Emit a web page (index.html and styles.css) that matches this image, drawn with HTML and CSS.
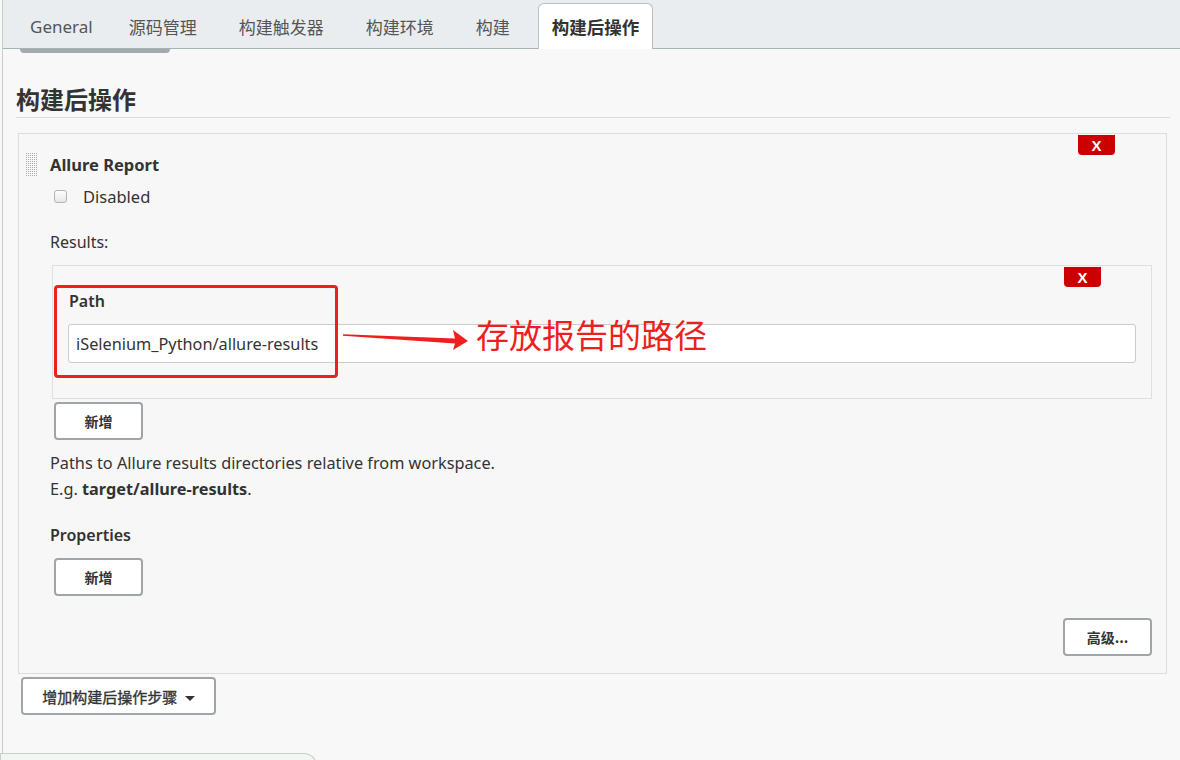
FILE: index.html
```html
<!DOCTYPE html>
<html lang="zh">
<head>
<meta charset="utf-8">
<title>构建后操作</title>
<link rel="stylesheet" href="styles.css">
</head>
<body>
<div class="page">
  <div class="tabbar">
    <div class="tab">General</div>
    <div class="tab">源码管理</div>
    <div class="tab">构建触发器</div>
    <div class="tab">构建环境</div>
    <div class="tab">构建</div>
    <div class="tab active">构建后操作</div>
  </div>
  <div class="tabshadow"></div>
  <div class="main">
    <h2 class="heading">构建后操作</h2>
    <div class="section">
      <div class="xbtn xbtn-outer">X</div>
      <div class="title-row">
        <span class="handle"></span>
        <span class="title">Allure Report</span>
      </div>
      <label class="check-row">
        <span class="checkbox"></span>
        <span>Disabled</span>
      </label>
      <div class="label results">Results:</div>
      <div class="inner">
        <div class="xbtn xbtn-inner">X</div>
        <div class="field-label">Path</div>
        <div class="input">iSelenium_Python/allure-results</div>
        <div class="anno-box"></div>
        <svg class="anno-arrow" width="130" height="24" viewBox="0 0 130 24"><polygon points="0,6.3 112,10.5 110,2 125,13 110,22 112,15.5 0,7.7" fill="#ee1f1f"/></svg>
        <div class="anno-text">存放报告的路径</div>
      </div>
      <button class="btn btn-add">新增</button>
      <div class="help">
        <div>Paths to Allure results directories relative from workspace.</div>
        <div>E.g. <b>target/allure-results</b>.</div>
      </div>
      <div class="label props">Properties</div>
      <button class="btn btn-add btn-add2">新增</button>
      <div class="adv-row"><button class="btn btn-adv">高级...</button></div>
    </div>
    <button class="btn btn-step">增加构建后操作步骤 <span class="caret"></span></button>
  </div>
  <div class="bottom-tab"></div>
</div>
</body>
</html>
```
FILE: styles.css
```css
html, body {
  margin: 0;
  padding: 0;
  background: #f8f8f8;
  font-family: "Noto Sans", "Noto Sans CJK SC", sans-serif;
  color: #333;
  overflow: hidden;
}
.page {
  margin-left: 2px;
  border-left: 1px solid #c9cccc;
  height: 760px;
  position: relative;
}
.tabbar {
  height: 48px;
  background: #e9edf0;
  border-bottom: 1px solid #a7b2b4;
  display: flex;
  align-items: flex-end;
  padding-left: 6px;
}
.tab {
  height: 44px;
  display: flex;
  align-items: center;
  padding: 0 21px;
  font-size: 17px;
  color: #555;
}
.tab:first-child { padding-right: 15px; }
.tab.active {
  margin-left: 7px;
  padding: 0 13px;
  background: #fff;
  border: 1px solid #b8c0c3;
  border-bottom: none;
  border-radius: 6px 6px 0 0;
  height: 45px;
  margin-bottom: -1px;
  font-size: 17.5px;
  font-weight: bold;
  color: #333;
}
.tabshadow {
  margin-left: 17px;
  width: 150px;
  height: 4px;
  background: #a2aaaf;
  border-radius: 0 0 6px 6px;
}
.main {
  padding: 0 10px 0 13px;
}
.heading {
  margin: 32px 0 0 0;
  font-size: 24px;
  line-height: 30px;
  padding-bottom: 2px;
  font-weight: bold;
  border-bottom: 1px solid #dcdcdc;
  color: #333;
}
.section {
  position: relative;
  margin: 15px 3px 0 2px;
  border: 1px solid #dddddd;
  background: #f7f7f7;
  height: 539px;
  padding: 0 14px 0 6px;
}
.xbtn {
  position: absolute;
  width: 37px;
  height: 20px;
  background: #cc0000;
  color: #fff;
  font-weight: bold;
  font-size: 15px;
  line-height: 21px;
  text-align: center;
  border-radius: 0 0 4px 4px;
  font-family: "Liberation Sans", sans-serif;
}
.xbtn-outer { top: 1px; right: 51px; }
.xbtn-inner { top: 1px; right: 50px; }
.title-row {
  display: flex;
  align-items: center;
  margin-top: 18px;
  height: 24px;
}
.handle {
  width: 13px;
  height: 24px;
  background-color: #aaaaaa;
  background-image: linear-gradient(to right, #f7f7f7 1px, transparent 1px), linear-gradient(to bottom, #f7f7f7 1px, transparent 1px);
  background-size: 2px 2px;
  margin-right: 12px;
}
.title {
  font-weight: bold;
  font-size: 16.5px;
  color: #333;
}
.check-row {
  display: flex;
  align-items: center;
  height: 24px;
  margin-top: 8px;
  margin-left: 29px;
  font-size: 16.5px;
}
.checkbox {
  width: 11px;
  height: 11px;
  border: 1px solid #b4b4b4;
  border-radius: 3px;
  background: linear-gradient(#fdfdfd, #e6e6e6);
  margin-right: 16px;
}
.label {
  font-size: 16px;
  margin-left: 25px;
  line-height: 24px;
}
.results { margin-top: 22px; }
.props { margin-top: 21px; font-weight: 600; }
.inner {
  position: relative;
  margin: 11px 0 0 27px;
  border: 1px solid #e0e0e0;
  background: #f7f7f7;
  height: 132px;
  padding: 0 15px 0 15px;
}
.field-label {
  margin-top: 23px;
  font-size: 16px;
  font-weight: 600;
  line-height: 24px;
  margin-left: 1px;
}
.input {
  margin-top: 11px;
  height: 37px;
  line-height: 39px;
  border: 1px solid #cccccc;
  border-radius: 3px;
  background: #fff;
  padding-left: 7px;
  font-size: 16.3px;
  color: #333;
}
.anno-box {
  position: absolute;
  left: 1px;
  top: 19px;
  width: 278px;
  height: 87px;
  border: 3px solid #ee1f1f;
  border-radius: 4px;
}
.anno-arrow {
  position: absolute;
  left: 290px;
  top: 62px;
}
.anno-text {
  position: absolute;
  left: 423px;
  top: 48px;
  font-size: 33px;
  line-height: 40px;
  color: #ee1f1f;
  font-family: "Noto Sans CJK SC", sans-serif;
}
.btn {
  display: block;
  font-family: "Noto Sans CJK SC", "Noto Sans", sans-serif;
  background: #fff;
  border: 2px solid #9fa5a9;
  border-radius: 4px;
  color: #333;
  font-weight: bold;
  font-size: 14px;
  height: 38px;
  padding: 0;
  cursor: pointer;
}
.btn-add {
  width: 89px;
  margin-left: 29px;
  margin-top: 3px;
}
.help {
  margin: 10px 0 0 25px;
  font-size: 16.3px;
  line-height: 26px;
}
.help b { font-weight: bold; }
.btn-add2 { margin-top: 11px; }
.adv-row {
  display: flex;
  justify-content: flex-end;
  margin-top: 22px;
}
.btn-adv {
  width: 89px;
}
.btn-step {
  margin: 3px 0 0 5px;
  width: 195px;
  font-size: 15px;
  font-weight: normal;
  -webkit-text-stroke: 0.35px #333;
}
.caret {
  display: inline-block;
  width: 0;
  height: 0;
  border-left: 5px solid transparent;
  border-right: 5px solid transparent;
  border-top: 5px solid #333;
  vertical-align: middle;
  margin-left: 4px;
}
.bottom-tab {
  margin: 38px 0 0 -3px;
  width: 315px;
  height: 12px;
  border: 1px solid #c8cfca;
  border-bottom: none;
  border-radius: 0 14px 0 0;
  background: #f2f6f2;
}
```
